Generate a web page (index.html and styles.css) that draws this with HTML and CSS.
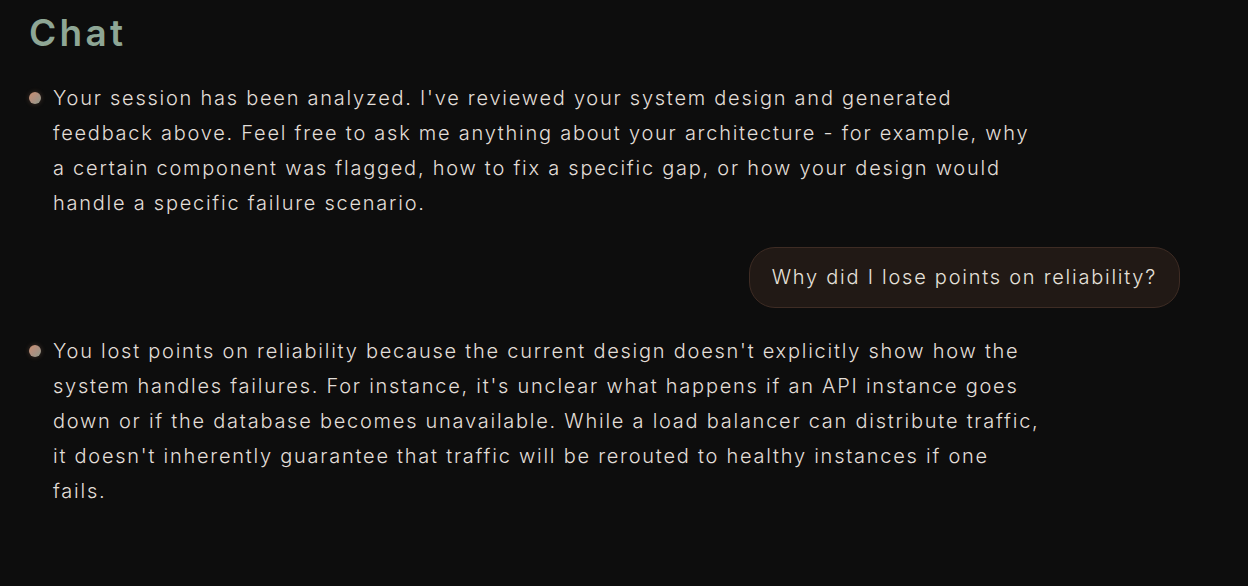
FILE: index.html
```html
<!DOCTYPE html>
<html lang="en">
<head>
<meta charset="utf-8">
<title>Chat</title>
<link rel="stylesheet" href="styles.css">
</head>
<body>
<main class="chat">
  <h1 class="chat-title">Chat</h1>
  <div class="messages">
    <div class="msg msg-ai">
      <span class="dot"></span>
      <p class="msg-text">Your session has been analyzed. I've reviewed your system design and generated feedback above. Feel free to ask me anything about your architecture - for example, why a certain component was flagged, how to fix a specific gap, or how your design would handle a specific failure scenario.</p>
    </div>
    <div class="msg msg-user">
      <p class="bubble">Why did I lose points on reliability?</p>
    </div>
    <div class="msg msg-ai">
      <span class="dot"></span>
      <p class="msg-text">You lost points on reliability because the current design doesn't explicitly show how the system handles failures. For instance, it's unclear what happens if an API instance goes down or if the database becomes unavailable. While a load balancer can distribute traffic, it doesn't inherently guarantee that traffic will be rerouted to healthy instances if one fails.</p>
    </div>
  </div>
</main>
</body>
</html>
```
FILE: styles.css
```css
html, body {
  margin: 0;
  padding: 0;
  background: #0d0d0d;
  height: 100%;
}
body {
  font-family: "Inter", "DejaVu Sans", sans-serif;
  color: #e2ded8;
}
.chat {
  padding: 11px 68px 0 29px;
}
.chat-title {
  margin: 0;
  font-family: "Inter", "DejaVu Sans", sans-serif;
  font-weight: 600;
  font-size: 37px;
  line-height: 44px;
  color: #8ea695;
  letter-spacing: 3.3px;
}
.messages {
  margin-top: 26px;
  display: flex;
  flex-direction: column;
  gap: 26px;
}
.msg {
  display: flex;
  align-items: flex-start;
}
.msg-ai {
  gap: 12px;
}
.msg-user {
  justify-content: flex-end;
}
.dot {
  flex: 0 0 12px;
  width: 12px;
  height: 12px;
  margin-top: 11px;
  border-radius: 50%;
  background: linear-gradient(135deg, #cb8f70 0%, #ae9080 50%, #8e9a8b 100%);
  box-shadow: 0 0 5px rgba(203, 143, 112, 0.3);
}
.msg-text {
  margin: 0;
  max-width: 990px;
  font-size: 20px;
  font-weight: 300;
  line-height: 35px;
  letter-spacing: 1.75px;
}
.bubble {
  margin: 0;
  padding: 12px 22px;
  border: 1px solid #3e2c24;
  border-radius: 26px;
  background: #211915;
  font-size: 20px;
  font-weight: 300;
  line-height: 35px;
  letter-spacing: 1.75px;
  color: #e6e1db;
}
```
